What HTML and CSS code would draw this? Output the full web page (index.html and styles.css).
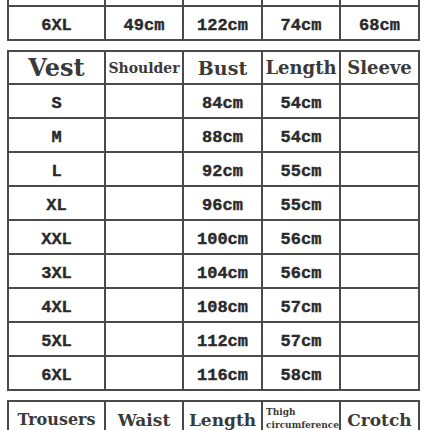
FILE: index.html
```html
<!DOCTYPE html>
<html>
<head>
<meta charset="utf-8">
<link rel="stylesheet" href="styles.css">
</head>
<body>
<div class="page">
  <div class="chart chart-top">
    <div class="cell"></div><div class="cell"></div><div class="cell"></div><div class="cell"></div><div class="cell"></div>
    <div class="cell val">6XL</div><div class="cell val">49cm</div><div class="cell val">122cm</div><div class="cell val">74cm</div><div class="cell val">68cm</div>
  </div>

  <div class="chart chart-vest">
    <div class="cell head h-vest">Vest</div>
    <div class="cell head h-shoulder">Shoulder</div>
    <div class="cell head h-bust">Bust</div>
    <div class="cell head h-length">Length</div>
    <div class="cell head h-sleeve">Sleeve</div>

    <div class="cell val">S</div><div class="cell"></div><div class="cell val">84cm</div><div class="cell val">54cm</div><div class="cell"></div>
    <div class="cell val">M</div><div class="cell"></div><div class="cell val">88cm</div><div class="cell val">54cm</div><div class="cell"></div>
    <div class="cell val">L</div><div class="cell"></div><div class="cell val">92cm</div><div class="cell val">55cm</div><div class="cell"></div>
    <div class="cell val">XL</div><div class="cell"></div><div class="cell val">96cm</div><div class="cell val">55cm</div><div class="cell"></div>
    <div class="cell val">XXL</div><div class="cell"></div><div class="cell val">100cm</div><div class="cell val">56cm</div><div class="cell"></div>
    <div class="cell val">3XL</div><div class="cell"></div><div class="cell val">104cm</div><div class="cell val">56cm</div><div class="cell"></div>
    <div class="cell val">4XL</div><div class="cell"></div><div class="cell val">108cm</div><div class="cell val">57cm</div><div class="cell"></div>
    <div class="cell val">5XL</div><div class="cell"></div><div class="cell val">112cm</div><div class="cell val">57cm</div><div class="cell"></div>
    <div class="cell val">6XL</div><div class="cell"></div><div class="cell val">116cm</div><div class="cell val">58cm</div><div class="cell"></div>
  </div>

  <div class="chart chart-trousers">
    <div class="cell head h-trousers">Trousers</div>
    <div class="cell head h-waist">Waist</div>
    <div class="cell head h-tlength">Length</div>
    <div class="cell head h-thigh"><span>Thigh</span><span>circumference</span></div>
    <div class="cell head h-crotch">Crotch</div>
  </div>
</div>
</body>
</html>
```
FILE: styles.css
```css
html, body {
  margin: 0;
  padding: 0;
  background: #ffffff;
  overflow: hidden;
}

.page {
  width: 430px;
  height: 430px;
  overflow: hidden;
  padding-left: 7px;
  box-sizing: border-box;
}

.chart {
  display: grid;
  grid-template-columns: 97px 78px 79px 78px 79px;
  width: 411px;
  border-top: 2px solid #4a4a4a;
  border-left: 2px solid #4a4a4a;
}

.chart-top {
  margin-top: -29px;
  grid-auto-rows: 34px;
}

.chart-vest {
  margin-top: 9px;
  grid-template-rows: 33px;
  grid-auto-rows: 34px;
}

.chart-trousers {
  margin-top: 9px;
  grid-auto-rows: 40px;
}

.cell {
  border-right: 2px solid #4a4a4a;
  border-bottom: 2px solid #4a4a4a;
  display: flex;
  align-items: center;
  justify-content: center;
  color: #2a2a2a;
  white-space: nowrap;
  overflow: hidden;
}

.val {
  font-family: "Liberation Mono", monospace;
  font-weight: bold;
  font-size: 17px;
  padding-top: 5px;
  -webkit-text-stroke: 0.4px #2a2a2a;
}

.head {
  font-family: "DejaVu Serif", "Liberation Serif", serif;
  font-weight: bold;
  color: #3a3a3a;
}

.h-vest { font-size: 24px; }
.h-shoulder { font-size: 14px; }
.h-bust { font-size: 19px; }
.h-length { font-size: 18px; }
.h-sleeve { font-size: 18px; }

.chart-trousers .head { align-items: flex-start; padding-top: 8px; }
.h-trousers { font-size: 16px; }
.h-waist { font-size: 17px; }
.h-tlength { font-size: 17px; }
.h-crotch { font-size: 17px; }

.h-thigh {
  flex-direction: column;
  align-items: flex-start !important;
  justify-content: flex-start;
  font-size: 9px;
  line-height: 13px;
  padding-left: 3px;
  padding-top: 4px !important;
}
```
